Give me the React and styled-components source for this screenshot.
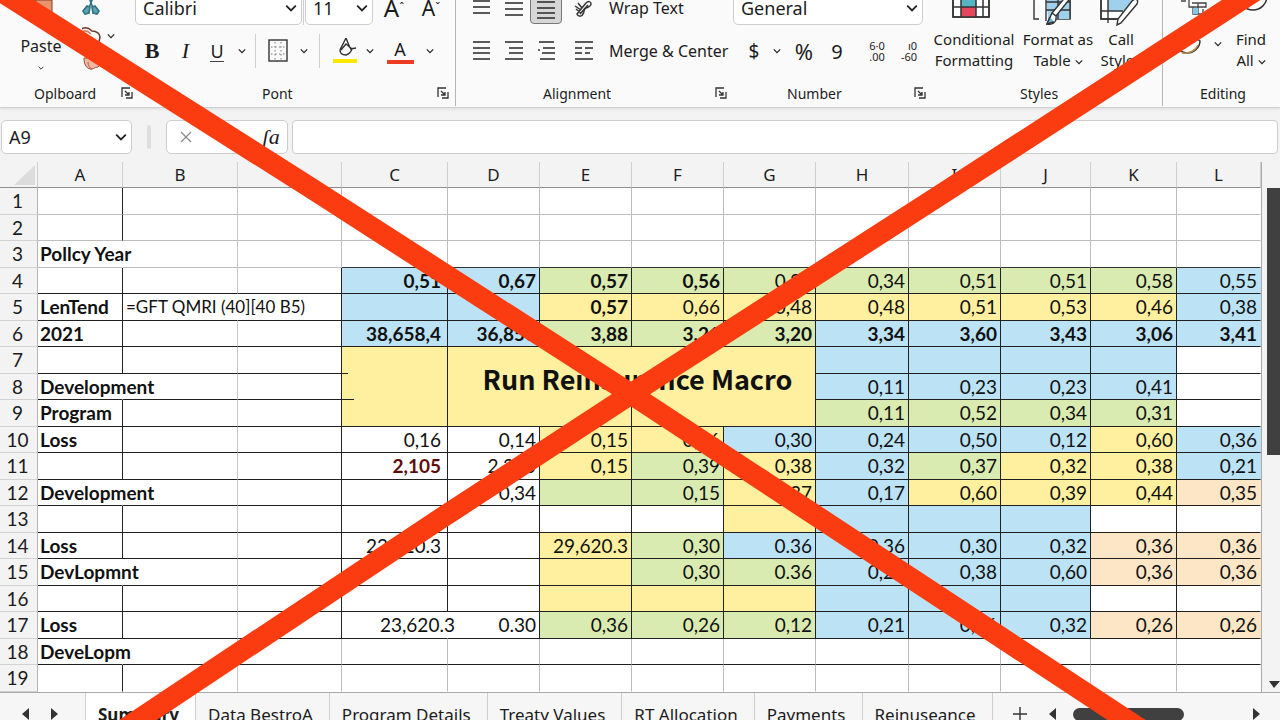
import React from "react";
import styled, { createGlobalStyle } from "styled-components";

const GlobalStyle = createGlobalStyle`
* { box-sizing: border-box; }
body {
margin: 0;
background: #f3f3f3;
color: #1c1c1c;
font-family: "Noto Sans", "Open Sans", sans-serif;
font-size: 16px;
overflow: hidden;
}
button, select, input {
font: inherit;
color: inherit;
}
`;

const fills = {
b: "#bce2f6",
g: "#d9ebb0",
y: "#fef09e",
o: "#fde6c6",
};

const columns = [
{ name: "A", width: 85 },
{ name: "B", width: 115 },
{ name: "", width: 104 },
{ name: "C", width: 106 },
{ name: "D", width: 92 },
{ name: "E", width: 92 },
{ name: "F", width: 92 },
{ name: "G", width: 92 },
{ name: "H", width: 93 },
{ name: "I", width: 92 },
{ name: "J", width: 90 },
{ name: "K", width: 86 },
{ name: "L", width: 84 },
];

// label = column A, values = C to L as "fill:text", * in front of the text is bold
const rows = [
{ values: [] },
{ values: [] },
{ label: "Pollcy Year", long: true, values: [] },
{ values: ["b:*0,51", "b:*0,67", "g:*0,57", "g:*0,56", "g:0,34", "g:0,34", "g:0,51", "g:0,51", "g:0,58", "b:0,55"] },
{ label: "LenTend", formula: "=GFT QMRI (40][40 B5)", values: ["b:", "b:", "y:*0,57", "y:0,66", "y:0,48", "y:0,48", "y:0,51", "y:0,53", "y:0,46", "b:0,38"] },
{ label: "2021", values: ["b:*38,658,4", "b:*36,850", "g:*3,88", "g:*3.21", "g:*3,20", "b:*3,34", "b:*3,60", "b:*3,43", "b:*3,06", "b:*3,41"] },
{ macro: true, values: ["b:", "b:", "b:", "b:", ""] },
{ label: "Development", long: true, values: ["b:0,11", "b:0,23", "b:0,23", "b:0,41", ""] },
{ label: "Program", values: ["g:0,11", "g:0,52", "g:0,34", "g:0,31", ""] },
{ label: "Loss", values: [":0,16", ":0,14", "y:0,15", "y:0,26", "b:0,30", "b:0,24", "b:0,50", "b:0,12", "y:0,60", "b:0,36"] },
{ values: [":!2,105", ":2,305", "y:0,15", "g:0,39", "y:0,38", "b:0,32", "g:0,37", "y:0,32", "y:0,38", "b:0,21"] },
{ label: "Development", long: true, values: ["", ":0,34", "g:", "g:0,15", "y:0,37", "b:0,17", "y:0,60", "y:0,39", "y:0,44", "o:0,35"] },
{ values: ["", "", "", "", "y:", "b:", "b:", "b:", "", ""] },
{ label: "Loss", values: [":22,620.3", "", "y:29,620.3", "g:0,30", "b:0.36", "b:0,36", "b:0,30", "b:0,32", "o:0,36", "o:0,36"] },
{ label: "DevLopmnt", long: true, values: ["", "", "y:", "g:0,30", "g:0.36", "b:0,25", "b:0,38", "b:0,60", "o:0,36", "o:0,36"] },
{ values: ["", "", "y:", "y:", "y:", "b:", "b:", "b:", "", ""] },
{ label: "Loss", values: [":>23,620.3", ":0.30", "g:0,36", "g:0,26", "g:0,12", "b:0,21", "b:0,36", "b:0,32", "o:0,26", "o:0,26"] },
{ label: "DeveLopm", long: true, values: [] },
{ values: [] },
];

const sheets = ["Summary", "Data BestroA", "Program Details", "Treaty Values", "RT Allocation", "Payments", "Reinuseance"];

/* ---------- icons ---------- */

function Chevron({ size = 10 }) {
return (
<svg width={size} height={size} viewBox="0 0 10 10" fill="none" stroke="#222" strokeWidth="1.5" aria-hidden="true">
<path d="M1 3l4 4 4-4" />
</svg>
);
}

function LauncherIcon() {
return (
<svg width="12" height="12" viewBox="0 0 12 12" fill="none" stroke="#333" strokeWidth="1.3" aria-hidden="true">
<path d="M1 10V1h8M11 5v6H5M4 4l4 4M8 5v3H4" />
</svg>
);
}

// each line is [x1, x2, y]
function LinesIcon({ lines, height = 20 }) {
return (
<svg width="20" height={height} viewBox={`0 0 20 ${height}`} stroke="#333" strokeWidth="1.6" aria-hidden="true">
{lines.map(([a, b, y], i) => <path key={i} d={`M${a} ${y}H${b}`} />)}
</svg>
);
}

function ClipboardIcon() {
return (
<svg width="26" height="30" viewBox="0 0 26 30" aria-hidden="true">
<path d="M2 2h20v24H2z" fill="#d06a43" stroke="#7c3d25" />
<path d="M7 8h17v14H12z" fill="#e8946e" stroke="#7c3d25" />
<path d="M1 25l6-1v4H1z" fill="#9c4a2f" />
</svg>
);
}

function ScissorsIcon() {
return (
<svg width="18" height="24" viewBox="0 0 18 24" fill="none" stroke="#2d7383" strokeWidth="1.6" aria-hidden="true">
<path d="M5 1l6 16M13 1L7 17" />
<path d="M1 20l4-5 3 1-1 6-4 1zM17 20l-4-5-3 1 1 6 4 1z" fill="#5fa3b1" />
</svg>
);
}

function CopyIcon() {
return (
<svg width="24" height="20" viewBox="4 0 24 20" fill="none" stroke="#6b3a2b" strokeWidth="1.5" aria-hidden="true">
<path d="M2 4c5-4 9-2 12 1 5 0 8 3 8 6l-1 5" />
<path d="M4 6c4-3 7 0 9 2" stroke="#c98468" />
</svg>
);
}

function BrushIcon() {
return (
<svg width="20" height="14" viewBox="0 0 20 14" aria-hidden="true">
<path d="M2 1c0 6 2 10 6 11 3 1 4-2 8-2l3-3L8 1z" fill="#edb9a3" stroke="#9a4f38" />
<path d="M6 5c0 4 2 6 4 7" stroke="#c0553a" fill="none" />
</svg>
);
}

function BordersIcon() {
return (
<svg width="20" height="24" viewBox="0 0 20 24" fill="none" stroke="#333" aria-hidden="true">
<rect x="1" y="1" width="18" height="21" strokeWidth="1.4" />
<path d="M7 3v18M13 3v18M3 8h14M3 15h14" strokeDasharray="1.5 2.5" stroke="#777" />
</svg>
);
}

function FillIcon() {
return (
<svg width="24" height="26" viewBox="0 0 24 26" fill="none" stroke="#333" strokeWidth="1.4" aria-hidden="true">
<path d="M13 0L7 12c0 3 2 5 6 5 3-1 5-3 6-6l-6-5-5 6M13 0l4 10M17 11l6-1" />
<path d="M0 23h24" stroke="#faea00" strokeWidth="4" />
</svg>
);
}

function OrientationIcon() {
return (
<svg width="20" height="22" viewBox="0 0 20 22" fill="none" stroke="#333" strokeWidth="1.5" aria-hidden="true">
<path d="M2 9l6 4M3 12l5 4M5 6l4 5M4 17l9-11c2-2 5-2 5 1 0 2-2 3-5 4-3 1-1 3-3 6-1 3-5 3-6 0z" />
<path d="M7 17l8-9" />
</svg>
);
}

function ConditionalIcon() {
return (
<svg width="44" height="30" viewBox="0 0 44 30" fill="none" stroke="#333" strokeWidth="1.5" aria-hidden="true">
<path d="M1 1h36v27H1z" fill="#fff" />
<path d="M9 1h15v17H9z" fill="#55b5c3" stroke="none" />
<path d="M9 18h15v10H9z" fill="#e5485d" stroke="none" />
<path d="M1 1h36v27H1zM1 9h36M1 18h36M9 1v27M24 1v27M31 9v19" />
</svg>
);
}

function FormatTableIcon() {
return (
<svg width="52" height="34" viewBox="0 0 52 34" fill="none" stroke="#333" strokeWidth="1.4" aria-hidden="true">
<path d="M2 1h36v26H16" fill="#fff" />
<path d="M14 1h24v26H16z" fill="#9fd0ec" stroke="none" />
<path d="M2 1v26h5M14 1v28M26 1v26M38 8v19M14 10h24M14 18h24" />
<path d="M40 4L24 24l-4-3L36 2zM20 21l-5 11c5 1 10-1 9-8z" fill="#fff" />
<path d="M18 25l-3 7 7-2" fill="#62b0dd" />
</svg>
);
}

function CellStyleIcon() {
return (
<svg width="44" height="34" viewBox="0 0 44 34" fill="none" stroke="#333" strokeWidth="1.4" aria-hidden="true">
<path d="M2 1h34v12L22 27H2z" fill="#fff" />
<path d="M9 1h27v9L24 19H9z" fill="#9fd0ec" stroke="none" />
<path d="M2 1v26h20M9 1v30M2 19h22" />
<path d="M36 7c3 0 3 3 2 5L22 31l-4 2 1-6L33 9z" fill="#fff" />
</svg>
);
}

function SortIcon() {
return (
<svg width="30" height="26" viewBox="0 0 30 26" fill="none" stroke="#444" strokeWidth="1.3" aria-hidden="true">
<path d="M2 6h12M5 2v7M10 3v9M2 10h5M13 12h14v4H10V7M14 16v7h10v-5M19 12v11" />
<path d="M14 17h5v6h-5z" fill="#8ac4e6" stroke="none" />
</svg>
);
}

function EraserIcon() {
return (
<svg width="34" height="22" viewBox="2 0 34 22" fill="none" stroke="#333" strokeWidth="1.5" aria-hidden="true">
<path d="M4 10L14 1l9 7c0 6-6 12-12 12-4 0-6-2-9-2" fill="#fff" />
<path d="M5 20c8 1 14-3 16-8" stroke="#b88b4a" />
</svg>
);
}

function FindIcon() {
return (
<svg width="48" height="32" viewBox="0 0 48 32" fill="none" stroke="#333" strokeWidth="1.5" aria-hidden="true">
<circle cx="26" cy="14" r="14" fill="#fff" />
<path d="M16 24L6 31" />
<path d="M1 26h10v5H1z" fill="#3a8fa5" stroke="none" />
</svg>
);
}

function Arrow({ direction }) {
const shapes = {
left: "M9 1v12L2 7z",
right: "M3 1v12l7-6z",
down: "M1 3h11L6 10z",
};
return (
<svg width="12" height="14" viewBox="0 0 12 14" fill="#333" aria-hidden="true">
<path d={shapes[direction]} />
</svg>
);
}

/* ---------- layout ---------- */

const Page = styled.div`
position: relative;
display: flex;
flex-direction: column;
height: 100vh;
overflow: hidden;
`;

const Ribbon = styled.header`
display: flex;
align-items: flex-end;
flex: none;
height: 108px;
overflow: hidden;
background: #fafafa;
border-bottom: 1px solid #cfcfcf;
box-shadow: 0 1px 3px #dcdcdc;
`;

const Group = styled.section`
display: flex;
flex-direction: column;
flex: ${(p) => p.$size} 1 ${(p) => p.$size}px;
min-width: 0;
height: 130px;
justify-content: flex-end;
padding-bottom: 1px;
margin-bottom: 1px;
border-right: 1px solid ${(p) => (p.$divided ? "#b5b5b5" : "transparent")};
`;

const GroupFooter = styled.div`
display: flex;
align-items: center;
height: 24px;
font-size: 14px;
padding-left: ${(p) => p.$lead}px;
padding-right: ${(p) => p.$trail || 0}px;
`;

const ToolRow = styled.div`
display: flex;
align-items: center;
height: ${(p) => (p.$top ? 34 : 32)}px;
margin-bottom: ${(p) => (p.$top ? 10 : 14)}px;
padding-left: ${(p) => p.$lead || 0}px;
white-space: nowrap;
`;

const Tool = styled.button`
display: flex;
align-items: center;
justify-content: center;
flex: none;
width: ${(p) => (p.$width ? `${p.$width}px` : "auto")};
height: 32px;
padding: 0;
border: 1px solid ${(p) => (p.$pressed ? "#777" : "transparent")};
border-radius: 4px;
background: ${(p) => (p.$pressed ? "#d6d6d6" : "transparent")};
font-size: ${(p) => p.$text || 16}px;
`;

const WideTool = styled(Tool)`
padding: 0 4px;
`;

const Launcher = styled(Tool)`
width: 14px;
height: 14px;
margin-left: auto;
border: 0;
`;

const Divider = styled.span`
flex: none;
width: 1px;
height: 34px;
margin: 0 ${(p) => p.$gap}px;
background: #d0d0d0;
`;

const Serif = styled.span`
font-family: "Liberation Serif", serif;
font-size: 22px;
font-weight: ${(p) => (p.$bold ? 700 : 400)};
font-style: ${(p) => (p.$italic ? "italic" : "normal")};
`;

const Underlined = styled.span`
font-size: 18px;
line-height: 20px;
border-bottom: 1px solid #444;
`;

const ColourLetter = styled.span`
width: 27px;
font-size: 18px;
line-height: 22px;
border-bottom: 4px solid #ee3b24;
`;

const Grow = styled.span`
font-size: ${(p) => p.$size}px;
line-height: 28px;
&::after {
content: "${(p) => p.$mark}";
font-size: 12px;
vertical-align: top;
}
`;

const ComboBox = styled.label`
display: grid;
align-items: center;
flex: 0 0 ${(p) => p.$width}px;
height: 34px;
background: #fff;
border: 1px solid #cdcdcd;
border-radius: 5px;
> * { grid-area: 1 / 1; }
> svg {
justify-self: end;
margin-right: 4px;
pointer-events: none;
}
`;

const Select = styled.select`
appearance: none;
width: 100%;
height: 100%;
padding: 0 7px;
border: 0;
background: transparent;
font-size: 18px;
`;

const Digits = styled.span`
display: block;
font-size: 11px;
line-height: 11px;
text-align: right;
`;

const BigTools = styled.div`
display: flex;
align-items: flex-end;
flex: none;
height: 100px;
padding-bottom: 10px;
padding-left: ${(p) => p.$lead || 0}px;
`;

const BigTool = styled.button`
display: flex;
flex-direction: column;
align-items: center;
flex: none;
width: ${(p) => p.$width}px;
padding: 0;
border: 0;
background: none;
font-size: ${(p) => p.$text || 15}px;
line-height: 21px;
white-space: nowrap;
> svg { flex: none; }
> svg:first-child { margin-bottom: ${(p) => p.$gap || 6}px; }
> svg:last-child { margin-top: 8px; }
`;

const IconStack = styled.div`
display: flex;
flex-direction: column;
align-items: flex-start;
justify-content: space-between;
height: 80px;
`;

const IconPair = styled.button`
display: flex;
align-items: center;
gap: 1px;
padding: 0;
border: 0;
background: none;
`;

/* ---------- formula bar ---------- */

const FormulaBar = styled.div`
display: flex;
align-items: center;
flex: none;
height: 54px;
padding: 4px 2px 0 1px;
`;

const Handle = styled.span`
width: 4px;
height: 24px;
margin: 0 15px;
border-radius: 2px;
background: #dedede;
`;

const FormulaTools = styled.div`
display: flex;
justify-content: space-between;
align-items: center;
width: 122px;
height: 34px;
margin-right: 4px;
padding: 0 4px;
background: #fff;
border: 1px solid #cdcdcd;
border-radius: 5px;
`;

const FormulaInput = styled.input`
flex: 1;
min-width: 0;
height: 34px;
padding: 0 8px;
background: #fff;
border: 1px solid #cdcdcd;
border-radius: 4px;
`;

/* ---------- sheet ---------- */

const SheetArea = styled.main`
display: flex;
flex: 1;
min-height: 0;
`;

const Table = styled.table`
flex: 1;
width: 100%;
height: 100%;
table-layout: fixed;
border-collapse: separate;
border-spacing: 0;
background: #fff;
font-family: Lato, "Noto Sans", sans-serif;
font-size: 19px;
line-height: 24px;
tbody tr { height: 26px; }
tbody tr:nth-child(odd) { height: 27px; }
`;

const ColumnHead = styled.th`
height: 26px;
padding: 0;
background: #f3f3f3;
border-right: 1px solid #cfcfcf;
border-bottom: 1px solid #8e8e8e;
font-family: "Noto Sans", sans-serif;
font-size: 17px;
font-weight: 400;
`;

const Corner = styled(ColumnHead)`
text-align: right;
vertical-align: bottom;
line-height: 0;
`;

const RowHead = styled.th`
padding: 0 2px 0 0;
background: #f3f3f3;
border-right: 1px solid #b5b5b5;
border-bottom: 1px solid #d2d2d2;
font-weight: 400;
`;

const Cell = styled.td`
padding: 0 ${(p) => (p.$wide ? 6 : 3)}px 0 2px;
background: ${(p) => fills[p.$fill] || "#fff"};
border-right: 1px solid ${(p) => p.$right};
border-bottom: 1px solid ${(p) => p.$bottom};
color: ${(p) => (p.$alert ? "#5e0d0b" : "#111")};
font-weight: ${(p) => (p.$bold ? 700 : 400)};
text-align: ${(p) => (p.$number ? "right" : "left")};
white-space: nowrap;
`;

const FormulaCell = styled(Cell)`
padding-left: 3px;
font-size: 17px;
`;

// a number too long for its cell runs over the border
const SpillCell = styled(Cell)`
padding-left: 38px;
padding-right: 0;
text-align: left;
`;

const MergedCell = styled(Cell)`
padding: 0;
background:
linear-gradient(#222, #222) 0 26px / 6px 1px no-repeat,
linear-gradient(#222, #222) 0 52px / 12px 1px no-repeat,
${fills.y};
`;

const MacroCell = styled(Cell)`
padding: 0;
background: linear-gradient(#222, #222) 50% 100% / 1px 24px no-repeat, ${fills.y};
`;

const MacroButton = styled.button`
display: block;
width: 100%;
padding: 0 0 16px 12px;
border: 0;
background: none;
font-family: "Noto Sans CJK JP", "Noto Sans", sans-serif;
font-size: 27px;
line-height: 32px;
font-weight: 700;
color: #111;
`;

const ScrollColumn = styled.div`
display: flex;
flex-direction: column;
align-items: flex-end;
justify-content: space-between;
flex: none;
width: 19px;
padding-top: 26px;
border-left: 1px solid #a9a9a9;
background: #f3f3f3;
`;

const ScrollThumb = styled.div`
width: 13px;
height: 53%;
background: #404040;
`;

/* ---------- sheet tabs ---------- */

const TabBar = styled.footer`
flex: none;
height: 28px;
overflow: hidden;
border-top: 1px solid #a9a9a9;
background: #f6f6f6;
`;

const TabRow = styled.div`
display: flex;
align-items: center;
height: 42px;
`;

const TabArrows = styled.div`
display: flex;
justify-content: flex-end;
gap: 16px;
width: 85px;
padding-right: 25px;
`;

const Tab = styled.button`
flex: none;
height: 42px;
padding: 0 16px 0 12px;
border: 0;
border-right: 1px solid #cfcfcf;
border-left: ${(p) => (p.$active ? "1px solid #cfcfcf" : "0")};
background: ${(p) => (p.$active ? "#fff" : "transparent")};
font-size: 17px;
font-weight: ${(p) => (p.$active ? 700 : 400)};
white-space: nowrap;
`;

const AddTab = styled(Tool)`
margin-left: 10px;
`;

const ScrollTrack = styled.div`
display: flex;
align-items: center;
flex: 1;
padding: 0 18px 0 10px;
> :last-child { margin-left: auto; }
`;

const HorizontalThumb = styled.div`
width: 111px;
height: 13px;
margin-left: 14px;
border-radius: 7px;
background: #404040;
`;

const Cross = styled.svg`
position: absolute;
inset: 0;
width: 100%;
height: 100%;
pointer-events: none;
`;

function Footer({ name, lead, trail, launcher }) {
return (
<GroupFooter $lead={lead} $trail={trail}>
{name}
{launcher && <Launcher aria-label={`${name} settings`}><LauncherIcon /></Launcher>}
</GroupFooter>
);
}

function Combo({ label, value, width, chevron = 12 }) {
return (
<ComboBox $width={width}>
<Select aria-label={label} defaultValue={value}>
<option>{value}</option>
</Select>
<Chevron size={chevron} />
</ComboBox>
);
}

function MainRibbon() {
return (
<Ribbon>
<Group $size={135}>
<BigTools>
<BigTool $width={82} $gap={14} $text={16}>
<ClipboardIcon />
<span>Paste</span>
<Chevron size={6} />
</BigTool>
<IconStack>
<IconPair aria-label="Cut"><ScissorsIcon /></IconPair>
<IconPair aria-label="Copy"><CopyIcon /><Chevron size={8} /></IconPair>
<IconPair aria-label="Format painter"><BrushIcon /></IconPair>
</IconStack>
</BigTools>
<Footer name="Oplboard" lead={34} launcher />
</Group>

<Group $size={321} $divided>
<ToolRow $top>
<Combo label="Font" value="Calibri" width={167} />
<Divider $gap={1} />
<Combo label="Font size" value="11" width={68} />
<Tool $width={42} aria-label="Grow font"><Grow $size={24} $mark="ˆ">A</Grow></Tool>
<Tool $width={32} aria-label="Shrink font"><Grow $size={21} $mark="ˇ">A</Grow></Tool>
</ToolRow>
<ToolRow>
<Tool $width={34}><Serif $bold>B</Serif></Tool>
<Tool $width={33}><Serif $italic>I</Serif></Tool>
<Tool $width={30}><Underlined>U</Underlined></Tool>
<Tool $width={20} aria-label="Underline style"><Chevron size={8} /></Tool>
<Divider $gap={3} />
<Tool $width={38} aria-label="Borders"><BordersIcon /></Tool>
<Tool $width={14} aria-label="Border style"><Chevron size={8} /></Tool>
<Divider $gap={8} />
<Tool $width={34} aria-label="Fill colour"><FillIcon /></Tool>
<Tool $width={16} aria-label="Fill palette"><Chevron size={8} /></Tool>
<Tool $width={44} aria-label="Font colour"><ColourLetter>A</ColourLetter></Tool>
<Tool $width={16} aria-label="Font palette"><Chevron size={8} /></Tool>
</ToolRow>
<Footer name="Pont" lead={127} trail={5} launcher />
</Group>

<Group $size={277}>
<ToolRow $top $lead={10}>
<Tool $width={32} aria-label="Top align"><LinesIcon lines={[[1, 18, 3], [1, 18, 9], [1, 18, 15]]} /></Tool>
<Tool $width={32} aria-label="Middle align"><LinesIcon lines={[[1, 19, 5], [1, 19, 11], [1, 19, 17]]} /></Tool>
<Tool $width={32} $pressed aria-label="Bottom align"><LinesIcon height={26} lines={[[1, 19, 7], [1, 19, 13], [1, 19, 18], [1, 19, 23]]} /></Tool>
<Tool $width={42} aria-label="Orientation"><OrientationIcon /></Tool>
<WideTool>Wrap Text</WideTool>
</ToolRow>
<ToolRow $lead={10}>
<Tool $width={32} aria-label="Align left"><LinesIcon lines={[[1, 18, 1], [1, 18, 7], [1, 18, 12], [1, 18, 18]]} /></Tool>
<Tool $width={32} aria-label="Align center"><LinesIcon lines={[[1, 19, 1], [5, 19, 7], [5, 19, 12], [1, 19, 18]]} /></Tool>
<Tool $width={34} aria-label="Align right"><LinesIcon lines={[[2, 17, 1], [6, 18, 7], [1, 3, 9], [5, 18, 12], [3, 18, 18]]} /></Tool>
<Tool $width={40} aria-label="Indent"><LinesIcon lines={[[1, 19, 1], [1, 8, 7], [11, 19, 7], [1, 8, 12], [11, 16, 12], [1, 19, 18]]} /></Tool>
<WideTool>Merge &amp; Center</WideTool>
</ToolRow>
<Footer name="Alignment" lead={87} trail={4} launcher />
</Group>

<Group $size={195}>
<ToolRow $top>
<Combo label="Number format" value="General" width={190} />
</ToolRow>
<ToolRow $lead={10}>
<Tool $width={22} $text={19}>$</Tool>
<Tool $width={24} aria-label="Currency"><Chevron size={8} /></Tool>
<Tool $width={30} $text={22}>%</Tool>
<Tool $width={36} $text={20}>9</Tool>
<Tool $width={44} aria-label="Increase decimal"><span><Digits>6·0</Digits><Digits>.00</Digits></span></Tool>
<Tool $width={20} aria-label="Decrease decimal"><span><Digits>ı0</Digits><Digits>-60</Digits></span></Tool>
</ToolRow>
<Footer name="Number" lead={54} launcher />
</Group>

<Group $size={235} $divided>
<BigTools $lead={2}>
<BigTool $width={88} $gap={10}>
<ConditionalIcon />
<span>Conditional</span>
<span>Formatting</span>
</BigTool>
<BigTool $width={80} $gap={3}>
<FormatTableIcon />
<span>Format as</span>
<span>Table <Chevron size={8} /></span>
</BigTool>
<BigTool $width={46} $gap={3}>
<CellStyleIcon />
<span>Call</span>
<span>Styles</span>
</BigTool>
</BigTools>
<Footer name="Styles" lead={92} />
</Group>

<Group $size={117}>
<BigTools $lead={16}>
<IconStack>
<IconPair aria-label="Sort"><SortIcon /></IconPair>
<IconPair aria-label="Clear"><EraserIcon /><Chevron size={8} /></IconPair>
<span />
</IconStack>
<BigTool $width={58} $gap={15}>
<FindIcon />
<span>Find</span>
<span>All <Chevron size={8} /></span>
</BigTool>
</BigTools>
<Footer name="Editing" lead={37} />
</Group>
</Ribbon>
);
}

function DataRow({ row, index }) {
const number = index + 1;
const plain = number < 4 || number > 17;
const side = plain ? "#bdbdbd" : "#222";
let bottom = "#1f1f1f";
if (number < 4) bottom = "#bdbdbd";
if (number === 19) bottom = "transparent";
const lineA = row.long ? "transparent" : "#222";
const values = row.values.length ? row.values : Array(10).fill("");

return (
<tr>
<RowHead scope="row">{number}</RowHead>
<Cell $bold $right={lineA} $bottom={bottom}>{row.label}</Cell>
<FormulaCell $right={row.formula ? "transparent" : "#c6c6c6"} $bottom={bottom}>{row.formula}</FormulaCell>
<Cell $right={side} $bottom={bottom} />
{row.macro && <MergedCell rowSpan={3} $right="#222" $bottom="#222" />}
{row.macro && (
<MacroCell colSpan={4} rowSpan={3} $right="#222" $bottom="#222">
<MacroButton>Run Reinsurance Macro</MacroButton>
</MacroCell>
)}
{values.map((value, i) => {
const [fill, raw = ""] = value.split(":");
const mark = raw[0];
const text = raw.replace(/^[*!>]/, "");
const Box = mark === ">" ? SpillCell : Cell;
const last = i === values.length - 1;
return (
<Box
key={i}
$number
$fill={fill}
$wide={i === 0 && values.length === 10}
$bold={mark === "*" || mark === "!"}
$alert={mark === "!"}
$right={last || mark === ">" ? "transparent" : side}
$bottom={number === 3 ? "#333" : bottom}
>
{text}
</Box>
);
})}
</tr>
);
}

function App() {
return (
<Page>
<GlobalStyle />
<MainRibbon />

<FormulaBar>
<Combo label="Name box" value="A9" width={131} />
<Handle />
<FormulaTools>
<Tool $width={30} aria-label="Cancel">
<svg width="12" height="12" viewBox="0 0 12 12" stroke="#888" strokeWidth="1.2"><path d="M1 1l10 10M11 1L1 11" /></svg>
</Tool>
<Tool $width={24}><Serif $italic>ʃa</Serif></Tool>
</FormulaTools>
<FormulaInput aria-label="Formula" />
</FormulaBar>

<SheetArea>
<Table>
<colgroup>
<col width="38" />
{columns.map((c, i) => <col key={i} width={c.width} />)}
</colgroup>
<thead>
<tr>
<Corner aria-label="Select all">
<svg width="24" height="22" viewBox="0 0 24 22"><path d="M22 0v20H1z" fill="#dcdcdc" /></svg>
</Corner>
{columns.map((c, i) => <ColumnHead key={i} scope="col">{c.name}</ColumnHead>)}
</tr>
</thead>
<tbody>
{rows.map((row, i) => <DataRow key={i} row={row} index={i} />)}
</tbody>
</Table>
<ScrollColumn>
<ScrollThumb />
<Arrow direction="down" />
</ScrollColumn>
</SheetArea>

<TabBar>
<TabRow>
<TabArrows>
<Arrow direction="left" />
<Arrow direction="right" />
</TabArrows>
{sheets.map((name, i) => <Tab key={name} $active={i === 0}>{name}</Tab>)}
<AddTab $width={34} aria-label="New sheet">
<svg width="16" height="16" viewBox="0 0 16 16" stroke="#333" strokeWidth="1.4"><path d="M8 1v14M1 8h14" /></svg>
</AddTab>
<ScrollTrack>
<Arrow direction="left" />
<HorizontalThumb />
<Arrow direction="right" />
</ScrollTrack>
</TabRow>
</TabBar>

<Cross viewBox="0 0 1280 720" preserveAspectRatio="none" fill="none" stroke="#fb3c10" strokeWidth="21">
<path d="M-17 -20L314 190L631 394L1157 740" />
<path d="M1272 -20L948 190L631 394L440 519L108 740" />
</Cross>
</Page>
);
}

export default App;
